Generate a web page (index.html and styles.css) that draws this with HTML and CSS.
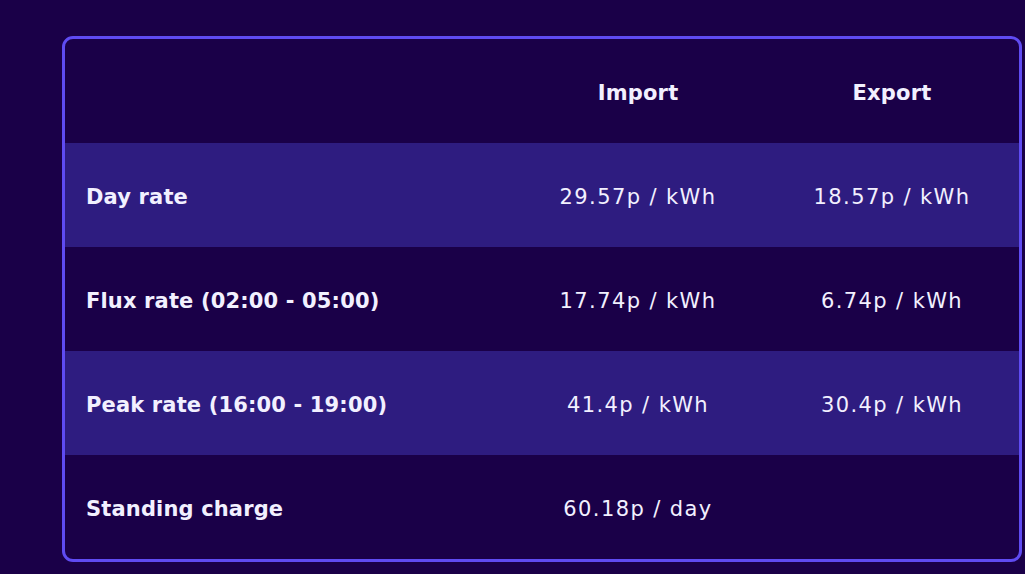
FILE: index.html
```html
<!DOCTYPE html>
<html lang="en">
<head>
<meta charset="utf-8">
<title>Rates</title>
<link rel="stylesheet" href="styles.css">
</head>
<body>
<div class="wrap">
  <table class="rates">
    <colgroup>
      <col class="c-label">
      <col class="c-val">
      <col class="c-val">
    </colgroup>
    <thead>
      <tr>
        <th></th>
        <th>Import</th>
        <th>Export</th>
      </tr>
    </thead>
    <tbody>
      <tr class="alt">
        <th>Day rate</th>
        <td>29.57p / kWh</td>
        <td>18.57p / kWh</td>
      </tr>
      <tr>
        <th>Flux rate (02:00 - 05:00)</th>
        <td>17.74p / kWh</td>
        <td>6.74p / kWh</td>
      </tr>
      <tr class="alt">
        <th>Peak rate (16:00 - 19:00)</th>
        <td>41.4p / kWh</td>
        <td>30.4p / kWh</td>
      </tr>
      <tr>
        <th>Standing charge</th>
        <td>60.18p / day</td>
        <td></td>
      </tr>
    </tbody>
  </table>
</div>
</body>
</html>
```

FILE: styles.css
```css
html, body {
  margin: 0;
  padding: 0;
  background: #1a0048;
}
body {
  font-family: "DejaVu Sans", "Open Sans", sans-serif;
  color: #f2f0ff;
}
.wrap {
  padding: 36px 0 0 62px;
}
.rates {
  width: 960px;
  border: 3px solid #5f4bf2;
  border-radius: 11px;
  border-collapse: separate;
  border-spacing: 0;
  overflow: hidden;
  table-layout: fixed;
}
.c-label { width: 446px; }
.c-val { width: 254px; }
.rates th,
.rates td {
  height: 104px;
  box-sizing: border-box;
  padding: 3px 0 0;
  vertical-align: middle;
  font-size: 21px;
}
.rates thead th {
  text-align: center;
  font-weight: 700;
  letter-spacing: 0.2px;
}
.rates tbody th {
  text-align: left;
  padding-left: 21px;
  font-weight: 700;
  letter-spacing: 0.15px;
}
.rates td {
  text-align: center;
  font-weight: 400;
  letter-spacing: 1.4px;
}
.rates tr.alt {
  background: #2e1c80;
}
```
